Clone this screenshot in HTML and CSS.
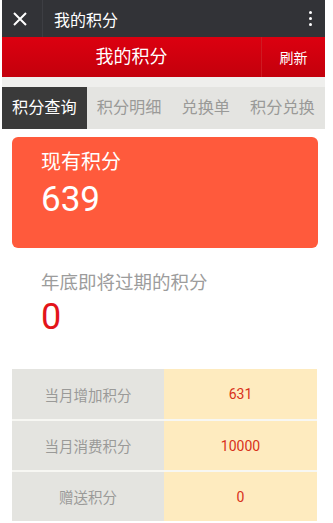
FILE: index.html
```html
<!DOCTYPE html>
<html>
    <head>
        <meta charset="utf-8">
        <title>我的积分</title>
        <meta name="viewport" content="width=device-width, initial-scale=1">
        <link rel="stylesheet" href="styles.css">
    </head>
    <body>
        <div class="page">
            <div class="topbar">
                <span class="close">
                    <svg width="14" height="14" viewBox="0 0 14 14"><path d="M1 1 L13 13 M13 1 L1 13" stroke="#fff" stroke-width="2" fill="none"/></svg>
                </span>
                <span class="top-title">我的积分</span>
                <span class="more"><i></i><i></i><i></i></span>
            </div>
            <div class="header">
                <div class="header-title">我的积分</div>
                <div class="refresh">刷新</div>
            </div>
            <div class="strip"></div>
            <div class="tabs">
                <div class="tab active">积分查询</div>
                <div class="tab">积分明细</div>
                <div class="tab">兑换单</div>
                <div class="tab">积分兑换</div>
            </div>
            <div class="card">
                <div class="card-label">现有积分</div>
                <div class="card-num">639</div>
            </div>
            <div class="expire">
                <div class="expire-label">年底即将过期的积分</div>
                <div class="expire-num">0</div>
            </div>
            <table class="stats">
                <tr><td class="key">当月增加积分</td><td class="val">631</td></tr>
                <tr><td class="key">当月消费积分</td><td class="val">10000</td></tr>
                <tr><td class="key">赠送积分</td><td class="val">0</td></tr>
            </table>
        </div>
    </body>
</html>
```

FILE: styles.css
```css
* {margin: 0px;padding: 0px;box-sizing: border-box;}
body {font-family: Roboto, "Noto Sans CJK SC", sans-serif;background-color: #fff;}
.page {width: 323px;margin-left: 2px;}
.topbar {height: 37px;background-color: #323337;display: flex;align-items: center;color: #fff;}
.close {width: 41px;height: 37px;display: flex;align-items: center;padding-left: 11px;border-right: 1px solid #3d3e43;}
.close svg {display: block;}
.top-title {font-size: 16px;margin-left: 11px;flex: 1;}
.more {width: 16px;display: flex;flex-direction: column;align-items: center;gap: 3px;margin-right: 7px;}
.more i {display: block;width: 3px;height: 3px;background-color: #fff;border-radius: 50%;}
.header {height: 40px;background: linear-gradient(#dc0010, #c3000c);display: flex;align-items: center;color: #fff;}
.header-title {flex: 1;text-align: center;font-size: 18px;height: 40px;line-height: 40px;border-right: 1px solid #cf1a22;}
.refresh {width: 63px;text-align: center;font-size: 14px;}
.strip {height: 10px;background-color: #efefed;}
.tabs {height: 42px;background-color: #e4e4e1;display: flex;overflow: hidden;}
.tab {flex-shrink: 0;white-space: nowrap;padding: 0 10px;line-height: 42px;font-size: 16.2px;color: #9a9a98;}
.tab.active {background-color: #3a3a3a;color: #fff;}
.card {margin: 8px 7px 0 10px;height: 111px;background-color: #ff5a3c;border-radius: 6px;padding: 13px 0 0 29px;color: #fff;}
.card-label {font-size: 20px;line-height: 24px;}
.card-num {font-size: 35px;line-height: 44px;margin-top: 4px;}
.expire {padding: 23px 0 0 39px;}
.expire-label {font-size: 18.5px;line-height: 24px;color: #9c9c9c;}
.expire-num {font-size: 36px;line-height: 40px;margin-top: 2px;color: #e3141a;}
.stats {margin: 32px 6px 0 10px;width: 305px;border-collapse: collapse;font-size: 14px;}
.stats td {height: 51px;text-align: center;border-bottom: 2px solid #f7f7f3;}
.stats tr:last-child td {border-bottom: none;height: 50px;}
.key {width: 152px;background-color: #e4e4e0;color: #9a9a98;font-size: 14.5px;}
.val {background-color: #feebbf;color: #d8301a;}
```
